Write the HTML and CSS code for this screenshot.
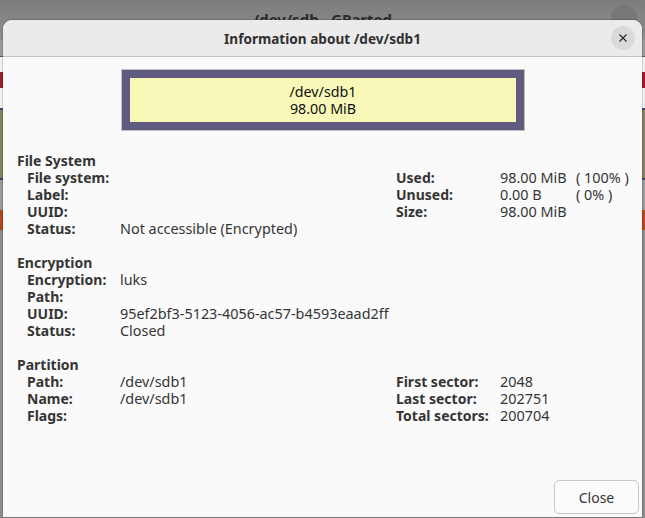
FILE: index.html
```html
<!DOCTYPE html>
<html>
<head>
<meta charset="utf-8">
<link rel="stylesheet" href="styles.css">
</head>
<body>
<div class="desktop">
  <div class="bg-window">
    <div class="bg-titlebar">
      <span class="bg-title">/dev/sdb - GParted</span>
      <span class="bg-close"></span>
    </div>
    <div class="bg-body"></div>
  </div>

  <div class="dialog">
    <div class="header">
      <span class="title">Information about /dev/sdb1</span>
      <button class="hclose" aria-label="Close">
        <svg width="10" height="10" viewBox="0 0 10 10"><path d="M1.5 1.5 L8.5 8.5 M8.5 1.5 L1.5 8.5" stroke="#2e2e2e" stroke-width="1.3" fill="none"/></svg>
      </button>
    </div>
    <div class="content">
      <div class="partbar">
        <div class="partinner">
          <div>/dev/sdb1</div>
          <div>98.00 MiB</div>
        </div>
      </div>

      <div class="section">
        <div class="heading">File System</div>
        <div class="grid">
          <div class="lbl">File system:</div><div class="val"></div>
          <div class="rlbl">Used:</div><div class="rval">98.00 MiB</div><div class="pct">( 100% )</div>
          <div class="lbl">Label:</div><div class="val"></div>
          <div class="rlbl">Unused:</div><div class="rval">0.00 B</div><div class="pct">( 0% )</div>
          <div class="lbl">UUID:</div><div class="val"></div>
          <div class="rlbl">Size:</div><div class="rval">98.00 MiB</div><div class="pct"></div>
          <div class="lbl">Status:</div><div class="val">Not accessible (Encrypted)</div>
          <div class="rlbl"></div><div class="rval"></div><div class="pct"></div>
        </div>
      </div>

      <div class="section">
        <div class="heading">Encryption</div>
        <div class="grid">
          <div class="lbl">Encryption:</div><div class="val wide">luks</div>
          <div class="lbl">Path:</div><div class="val wide"></div>
          <div class="lbl">UUID:</div><div class="val wide">95ef2bf3-5123-4056-ac57-b4593eaad2ff</div>
          <div class="lbl">Status:</div><div class="val wide">Closed</div>
        </div>
      </div>

      <div class="section">
        <div class="heading">Partition</div>
        <div class="grid">
          <div class="lbl">Path:</div><div class="val">/dev/sdb1</div>
          <div class="rlbl">First sector:</div><div class="rval">2048</div><div class="pct"></div>
          <div class="lbl">Name:</div><div class="val">/dev/sdb1</div>
          <div class="rlbl">Last sector:</div><div class="rval">202751</div><div class="pct"></div>
          <div class="lbl">Flags:</div><div class="val"></div>
          <div class="rlbl">Total sectors:</div><div class="rval">200704</div><div class="pct"></div>
        </div>
      </div>
    </div>
    <div class="footer">
      <button class="close-btn">Close</button>
    </div>
  </div>
</div>
</body>
</html>
```

FILE: styles.css
```css
html, body {
  margin: 0;
  padding: 0;
}
body {
  width: 645px;
  height: 518px;
  overflow: hidden;
  font-family: "Noto Sans", "Open Sans", sans-serif;
  font-size: 14px;
  color: #353535;
}
.desktop {
  position: relative;
  width: 645px;
  height: 518px;
  background: #6f6f6f;
}
.bg-window {
  display: flex;
  flex-direction: column;
  height: 100%;
}
.bg-titlebar {
  height: 40px;
  background: linear-gradient(#7d7d7d, #8e8e8e);
  display: flex;
  justify-content: center;
  position: relative;
}
.bg-title {
  margin-top: 9px;
  font-weight: bold;
  font-size: 15px;
  color: #2b2b2b;
}
.bg-close {
  position: absolute;
  right: 8px;
  top: 5px;
  width: 26px;
  height: 26px;
  border-radius: 50%;
  background: #777;
}
.bg-body {
  flex: 1;
  background:
    linear-gradient(to bottom,
      #9a9a9a 0, #9a9a9a 16px,
      #5a5a5a 16px, #5a5a5a 17px,
      #f0f0f0 17px, #f0f0f0 32px,
      #a21d2a 32px, #a21d2a 48px,
      #f0f0f0 48px, #f0f0f0 68px,
      #47405f 68px, #47405f 70px,
      #85825e 70px, #85825e 138px,
      #47405f 138px, #47405f 140px,
      #9a9a9a 140px, #9a9a9a 170px,
      #b4461c 170px, #b4461c 190px,
      #8c8c8c 190px);
}
.dialog {
  position: absolute;
  left: 3px;
  top: 20px;
  width: 639px;
  height: 497px;
  background: #fafafa;
  border-radius: 9px 9px 0 0;
  box-shadow: 0 0 0 1px rgba(0,0,0,0.15);
  display: flex;
  flex-direction: column;
  overflow: hidden;
}
.header {
  height: 36px;
  flex: none;
  background: #ebebeb;
  border-bottom: 1px solid #c5c5c5;
  display: flex;
  align-items: center;
  justify-content: center;
  position: relative;
}
.title {
  font-weight: bold;
  font-size: 13.6px;
  color: #303030;
}
.hclose {
  position: absolute;
  right: 7px;
  top: 6px;
  width: 24px;
  height: 24px;
  border-radius: 50%;
  border: none;
  background: #dadada;
  padding: 0;
  display: flex;
  align-items: center;
  justify-content: center;
}
.content {
  flex: 1;
  padding: 12px 0 0 14px;
}
.partbar {
  margin-left: 104px;
  border: 1px solid #c0c0c0;
  background: #615b80;
  padding: 8px;
  width: 386px;
  height: 44px;
}
.partinner {
  background: #f8f8b8;
  height: 44px;
  display: flex;
  flex-direction: column;
  justify-content: center;
  align-items: center;
  color: #111;
  line-height: 17px;
  font-size: 14.3px;
}
.section {
  margin-top: 21px;
  line-height: 17px;
}
.section + .section {
  margin-top: 17px;
}
.heading {
  font-weight: bold;
}
.grid {
  display: grid;
  grid-template-columns: 93px 276px 104px 76px auto;
  grid-auto-rows: 17px;
  padding-left: 10px;
}
.lbl, .rlbl {
  font-weight: bold;
  white-space: nowrap;
}
.val, .rval, .pct {
  white-space: nowrap;
  font-size: 14.4px;
}
.val.wide {
  grid-column: 2 / 6;
}
.footer {
  flex: none;
  display: flex;
  justify-content: flex-end;
  padding: 0 3px 3px 0;
}
.close-btn {
  width: 85px;
  height: 34px;
  border: 1px solid #cdc7c2;
  border-radius: 5px;
  background: #fbfbfb;
  font-family: inherit;
  font-size: 14px;
  color: #353535;
}
```
